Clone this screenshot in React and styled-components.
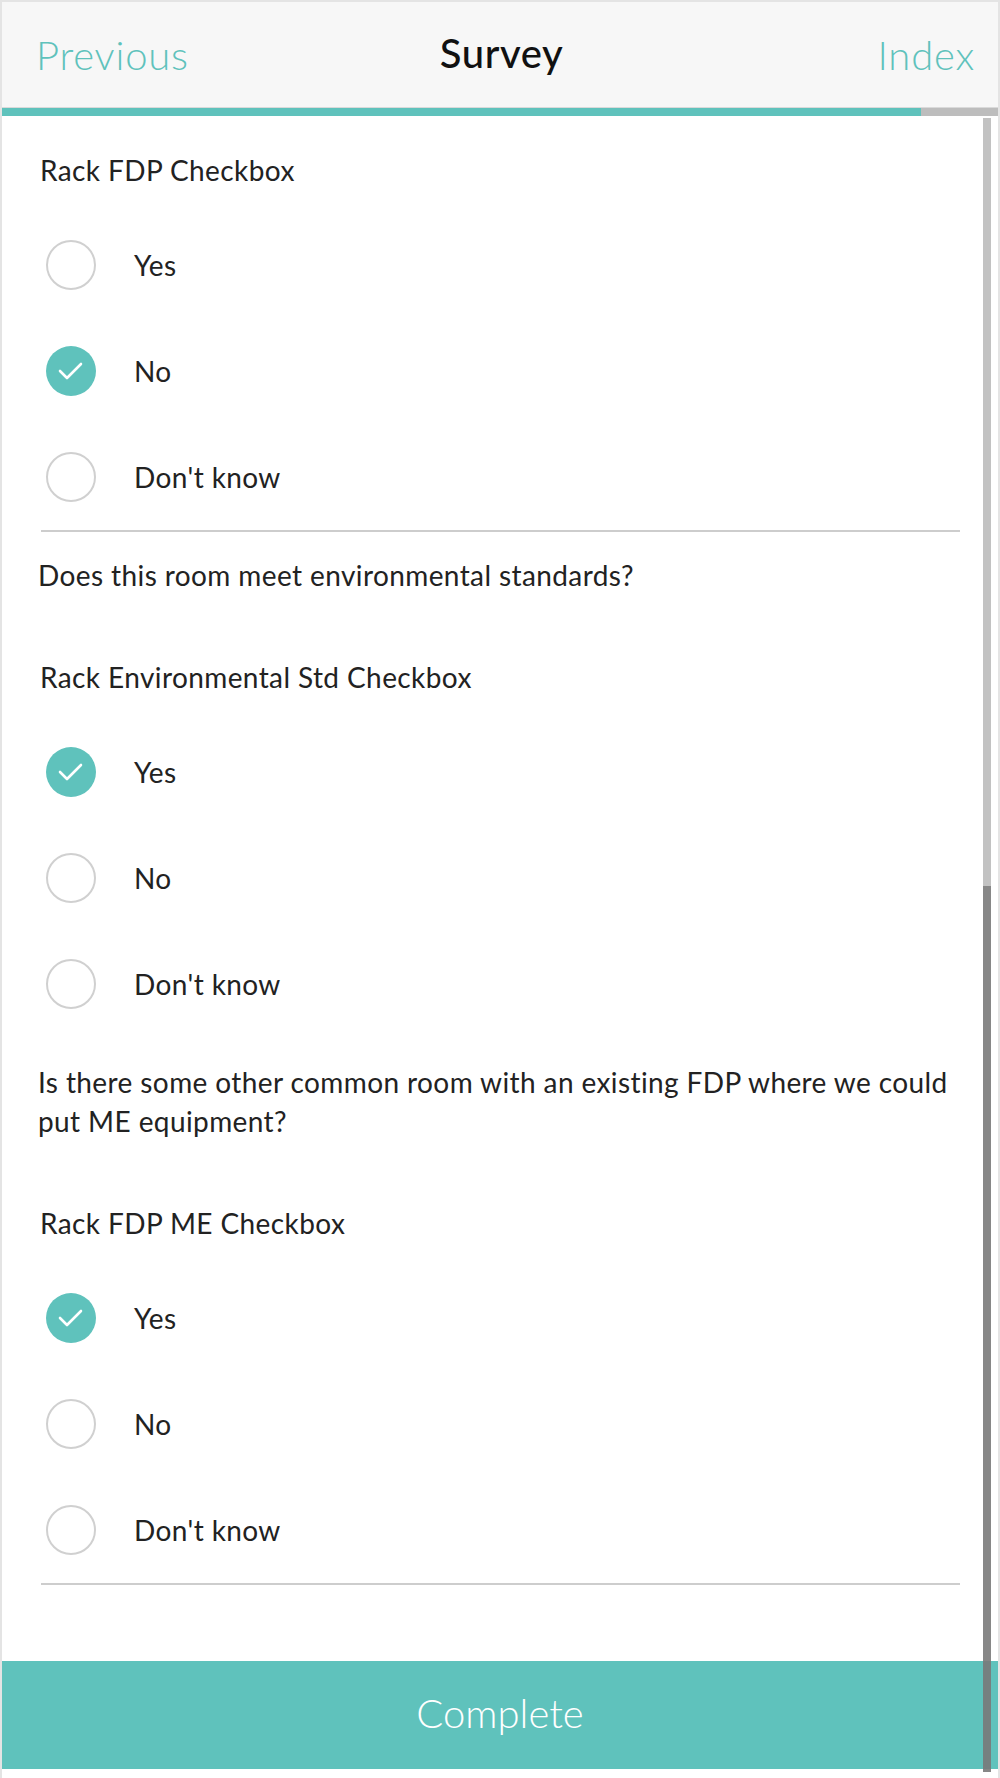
import React from "react";
import styled, { createGlobalStyle } from "styled-components";

const TEAL = "#5fc2bc";

const Global = createGlobalStyle`
  html, body { margin: 0; padding: 0; background: #fff; }
  body { font-family: Lato, "Noto Sans", sans-serif; color: #222; }
  * { box-sizing: border-box; }
`;

const Frame = styled.div`
  position: relative;
  width: 1000px;
  height: 1778px;
  border: 2px solid #e4e4e4;
  border-bottom: none;
  display: flex;
  flex-direction: column;
  overflow: hidden;
  background: #fff;
`;

const Header = styled.header`
  height: 106px;
  background: #f7f7f7;
  border-bottom: 1px solid #dadada;
  display: grid;
  grid-template-columns: 1fr auto 1fr;
  align-items: center;
  padding: 0 23px 0 34px;
`;

const NavLink = styled.span`
  font-family: Lato, sans-serif;
  font-weight: 300;
  font-size: 40px;
  letter-spacing: 0.8px;
  color: ${TEAL};
  justify-self: ${(p) => (p.$right ? "end" : "start")};
`;

const Title = styled.h1`
  margin: 0 0 4px;
  font-family: Lato, sans-serif;
  font-weight: 500;
  font-size: 40px;
  letter-spacing: 0.6px;
  color: #111;
  transform: translateX(-4px);
`;

const Progress = styled.div`
  height: 8px;
  background: #bdbdbd;
  display: flex;
`;

const ProgressFill = styled.div`
  height: 100%;
  background: ${TEAL};
`;

const Content = styled.main`
  flex: 1;
  padding: 35px 38px 0 37px;
  display: flex;
  flex-direction: column;
  font-size: 28px;
  letter-spacing: 0.4px;
  color: #222;
`;

const Section = styled.section`
  display: flex;
  flex-direction: column;
  margin-top: ${(p) => p.$gap || 0}px;
`;

const Question = styled.p`
  margin: 0 0 63px -1px;
  line-height: 39px;
`;

const Label = styled.div`
  margin: 0 0 23px 1px;
  line-height: 38px;
`;

const Options = styled.div`
  display: flex;
  flex-direction: column;
`;

const Option = styled.label`
  height: 106px;
  display: flex;
  align-items: center;
  padding-left: 7px;
`;

const Radio = styled.span`
  width: 50px;
  height: 50px;
  border-radius: 50%;
  flex-shrink: 0;
  border: ${(p) => (p.$checked ? "none" : "2px solid #d0d0d0")};
  background: ${(p) => (p.$checked ? TEAL : "#fff")};
  display: flex;
  align-items: center;
  justify-content: center;
  margin-right: 38px;
`;

const Divider = styled.hr`
  margin: 0 0 0 2px;
  border: none;
  height: 2px;
  background: #cdcdcd;
`;

const CompleteButton = styled.button`
  height: 108px;
  border: none;
  background: ${TEAL};
  color: #fff;
  font-family: Lato, sans-serif;
  font-weight: 300;
  font-size: 40px;
  padding: 0 0 5px;
  margin-bottom: 9px;
`;

const ScrollTrack = styled.div`
  position: absolute;
  left: 981px;
  top: 116px;
  width: 8px;
  height: 1654px;
  background: rgba(128, 128, 128, 0.48);
  display: flex;
  flex-direction: column;
  justify-content: flex-end;
`;

const ScrollThumb = styled.div`
  background: rgba(120, 120, 120, 0.8);
`;

function Check() {
  return (
    <svg width="50" height="50" viewBox="0 0 50 50">
      <polyline
        points="14,25 21,32 35,18"
        fill="none"
        stroke="#fff"
        strokeWidth="2.6"
        strokeLinecap="round"
        strokeLinejoin="round"
      />
    </svg>
  );
}

const OPTS = ["Yes", "No", "Don't know"];

function Field({ question, label, selected, divider, gap }) {
  return (
    <Section $gap={gap}>
      {question && <Question>{question}</Question>}
      <Label>{label}</Label>
      <Options>
        {OPTS.map((o) => (
          <Option key={o}>
            <Radio $checked={o === selected}>{o === selected && <Check />}</Radio>
            {o}
          </Option>
        ))}
      </Options>
      {divider && <Divider />}
    </Section>
  );
}

export default function App() {
  return (
    <>
      <Global />
      <Frame>
        <Header>
          <NavLink>Previous</NavLink>
          <Title>Survey</Title>
          <NavLink $right>Index</NavLink>
        </Header>
        <Progress>
          <ProgressFill style={{ width: "92.3%" }} />
        </Progress>
        <Content>
          <Field label="Rack FDP Checkbox" selected="No" divider />
          <Field
            gap={24}
            question="Does this room meet environmental standards?"
            label="Rack Environmental Std Checkbox"
            selected="Yes"
          />
          <Field
            gap={26}
            question="Is there some other common room with an existing FDP where we could put ME equipment?"
            label="Rack FDP ME Checkbox"
            selected="Yes"
            divider
          />
        </Content>
        <CompleteButton>Complete</CompleteButton>
        <ScrollTrack>
          <ScrollThumb style={{ height: "886px" }} />
        </ScrollTrack>
      </Frame>
    </>
  );
}
